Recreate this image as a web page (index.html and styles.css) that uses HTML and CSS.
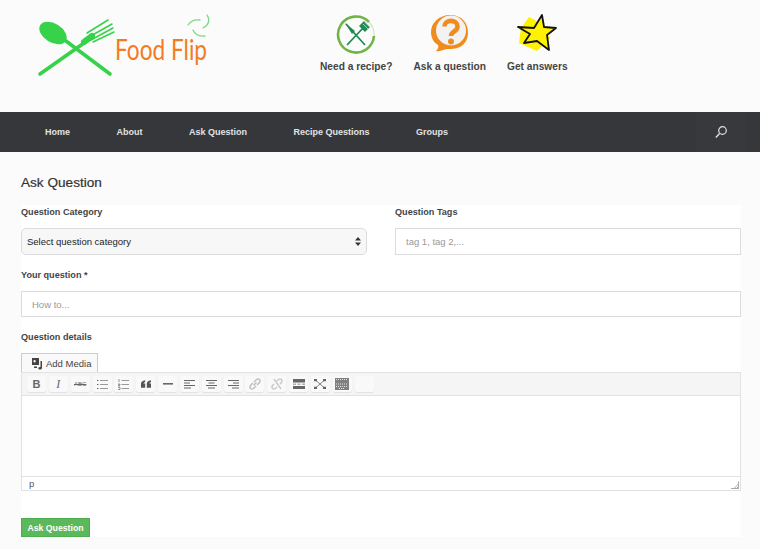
FILE: index.html
```html
<!DOCTYPE html>
<html lang="en">
<head>
    <meta charset="UTF-8">
    <title>Ask Question - Food Flip</title>
    <link rel="stylesheet" href="styles.css">
</head>
<body>
    <!-- Logo and the three steps -->
    <header class="top">
        <svg class="logo" width="200" height="70" viewBox="0 0 200 70">
            <g fill="none" stroke="#35d24a" stroke-linecap="round">
                <path d="M4 61 L48 30" stroke-width="3.6"/>
                <path d="M74 61 L30 28" stroke-width="3.6"/>
                <path d="M48 29 L56 23" stroke-width="6"/>
                <path d="M51 20 L72 7 M53 24 L76 11 M55 27 L77 15 M57 29 L78 19" stroke-width="1.5"/>
            </g>
            <g fill="none" stroke="#7fd98a" stroke-linecap="round" stroke-width="1.3">
                <path d="M152 12 Q156 6 164 7"/>
                <path d="M171 2 Q176 10 167 15"/>
                <path d="M157 17 Q160 24 169 23"/>
            </g>
            <ellipse cx="17" cy="20" rx="15" ry="9.5" fill="#35d24a" transform="rotate(32 17 20)"/>
            <text class="logo-text" x="79" y="47" textLength="92" lengthAdjust="spacingAndGlyphs">Food Flip</text>
        </svg>
        <ul class="steps">
            <li class="step">
                <svg width="40" height="40" viewBox="0 0 40 40">
                    <path d="M33 8 A18 18 0 1 0 38 22" fill="none" stroke="#6fb545" stroke-width="2.6"/>
                    <path d="M38 22 A18 18 0 0 0 33 8" fill="none" stroke="#cfe5bb" stroke-width="1.2"/>
                    <path d="M10 10 L29 31 M28 13 L11 31" stroke="#1f8a53" stroke-width="1.8"/>
                    <path d="M9 9 L19 17 L16 20 Z" fill="#1f8a53"/>
                    <path d="M26 15 L23 12 L28 7 L34 13 L29 18 Z" fill="#1f8a53"/>
                    <path d="M27 10 L32 15 M29 8.5 L33.5 13" stroke="#fff" stroke-width=".6"/>
                </svg>
                <span>Need a recipe?</span>
            </li>
            <li class="step">
                <svg width="40" height="40" viewBox="0 0 40 40">
                    <path d="M20 1 C32 1 38 9 38 19 C38 30 29 36 18 35 C14 35 11 38 6 37 C8 35 9 33 8 31 C3 28 1 23 1 18 C1 9 9 1 20 1 Z" fill="#f08c1e"/>
                    <circle cx="21" cy="16.5" r="15" fill="#f2f2f2"/>
                    <path d="M14.5 12.5 C14.5 5 27.5 5 27.5 12.5 C27.5 18 21 17 21 22" fill="none" stroke="#f08c1e" stroke-width="4.6"/>
                    <circle cx="21" cy="27.5" r="3" fill="#f08c1e"/>
                </svg>
                <span>Ask a question</span>
            </li>
            <li class="step">
                <svg width="40" height="40" viewBox="0 0 40 40">
                    <path d="M12 3 L18 6 L33 24 L20 37 L2 29 L4 14 Z" fill="#fff200"/>
                    <path d="M25 1 L27 13 L39 14 L30 21 L32 36 L20 27 L7 29 L13 20 L1 13 L17 14 Z" fill="#fff200" stroke="#111" stroke-width="1.8" stroke-linejoin="round"/>
                </svg>
                <span>Get answers</span>
            </li>
        </ul>
    </header>

    <nav class="menu">
        <a href="#">Home</a>
        <a href="#">About</a>
        <a href="#">Ask Question</a>
        <a href="#">Recipe Questions</a>
        <a href="#">Groups</a>
        <button class="search-btn" type="button" aria-label="Search">
            <svg width="14" height="14" viewBox="0 0 14 14" fill="none" stroke="#e4e4e4">
                <circle cx="8.5" cy="5.5" r="3.8" stroke-width="1.2"/>
                <path d="M5.6 8.4 L1.8 12.4" stroke-width="1.4"/>
            </svg>
        </button>
    </nav>

    <main class="content">
        <h1>Ask Question</h1>
        <form class="ask-form">
            <div class="row">
                <div class="field">
                    <label>Question Category</label>
                    <div class="select-box">
                        <span>Select question category</span>
                        <svg width="6" height="9" viewBox="0 0 6 9" fill="#333"><path d="M3 0 L6 3.5 H0 Z M3 9 L0 5.5 H6 Z"/></svg>
                    </div>
                </div>
                <div class="field">
                    <label>Question Tags</label>
                    <input class="text-input" type="text" placeholder="tag 1, tag 2,...">
                </div>
            </div>

            <label class="label-question">Your question *</label>
            <input class="text-input" type="text" placeholder="How to...">

            <label class="label-details">Question details</label>
            <button class="add-media" type="button">
                <svg width="13" height="13" viewBox="0 0 13 13" fill="#444">
                    <path d="M1 1 H8 V8 H1 Z M3.5 3 A1.2 1.2 0 1 0 3.6 5.4 A1.2 1.2 0 1 0 3.5 3 Z"/>
                    <path d="M9.5 4 H11 V11 Q11 12.5 9 12.5 Q7 12.5 7.3 11 Q7.6 9.8 9.5 10 Z M3 9.5 H6 V11 H3 Z"/>
                </svg>
                Add Media
            </button>

            <div class="editor">
                <div class="toolbar">
                    <span class="tool tool-b">B</span>
                    <span class="tool tool-i">I</span>
                    <span class="tool tool-abc">ABC</span>
                    <span class="tool"><svg width="11" height="11" viewBox="0 0 11 11" stroke="#999"><path d="M3 1.5 H11 M3 5.5 H11 M3 9.5 H11"/><path d="M0 1.5 H1.5 M0 5.5 H1.5 M0 9.5 H1.5" stroke="#666"/></svg></span>
                    <span class="tool"><svg width="11" height="11" viewBox="0 0 11 11" stroke="#999"><path d="M3.5 1.5 H11 M3.5 5.5 H11 M3.5 9.5 H11"/><path d="M1 0 V3 M0.2 5 H2 V6 H0.2 V7 H2 M0.2 8.5 H2 V10.5 H0.2" stroke="#666" stroke-width=".7" fill="none"/></svg></span>
                    <span class="tool"><svg width="10" height="8" viewBox="0 0 12 9" fill="#555"><path d="M5 0 V2 Q3 3 3 4 H5 V9 H0 V4 Q0 1 5 0 Z M12 0 V2 Q10 3 10 4 H12 V9 H7 V4 Q7 1 12 0 Z"/></svg></span>
                    <span class="tool"><svg width="10" height="2" viewBox="0 0 10 2" fill="#666"><path d="M0 0 H10 V1.6 H0 Z"/></svg></span>
                    <span class="tool"><svg width="11" height="11" viewBox="0 0 11 11" stroke="#666"><path d="M0 1.5 H11 M0 4 H6 M0 6.5 H11 M0 9 H7"/></svg></span>
                    <span class="tool"><svg width="11" height="11" viewBox="0 0 11 11" stroke="#666"><path d="M0 1.5 H11 M2.5 4 H8.5 M0 6.5 H11 M2 9 H9"/></svg></span>
                    <span class="tool"><svg width="11" height="11" viewBox="0 0 11 11" stroke="#666"><path d="M0 1.5 H11 M5 4 H11 M0 6.5 H11 M4 9 H11"/></svg></span>
                    <span class="tool"><svg width="12" height="12" viewBox="0 0 12 12" fill="none" stroke="#bdbdbd" stroke-width="1.4"><path d="M5 4 L7.5 1.5 Q9 0.5 10.5 1.5 Q11.5 3 10.5 4.5 L8 7 M7 8 L4.5 10.5 Q3 11.5 1.5 10.5 Q0.5 9 1.5 7.5 L4 5 M4.5 7.5 L7.5 4.5"/></svg></span>
                    <span class="tool"><svg width="12" height="12" viewBox="0 0 12 12" fill="none" stroke="#c8c8c8" stroke-width="1.4"><path d="M6 3 L7.5 1.5 Q9 0.5 10.5 1.5 Q11.5 3 10.5 4.5 L9 6 M6 9 L4.5 10.5 Q3 11.5 1.5 10.5 Q0.5 9 1.5 7.5 L3 6 M3 1 L10 11"/></svg></span>
                    <span class="tool"><svg width="12" height="10" viewBox="0 0 12 10" fill="#666"><path d="M0 0 H12 V3.5 H0 Z M0 7 H12 V10 H0 Z M0 4.7 H3 V5.6 H0 Z M4.5 4.7 H7.5 V5.6 H4.5 Z M9 4.7 H12 V5.6 H9 Z"/></svg></span>
                    <span class="tool"><svg width="12" height="10" viewBox="0 0 12 10" fill="#666" stroke="#666"><path d="M2 1.5 L10 8.5 M10 1.5 L2 8.5" stroke-width=".8"/><path d="M0 0 H3 V2.2 H0 Z M9 0 H12 V2.2 H9 Z M0 7.8 H3 V10 H0 Z M9 7.8 H12 V10 H9 Z" stroke="none"/></svg></span>
                    <span class="tool"><svg width="14" height="12" viewBox="0 0 14 12"><path d="M0 0 H14 V12 H0 Z" fill="#808080"/><path d="M1 1.5 H13 M1 6 H13 M1 8.5 H13 M4 10.5 H10" stroke="#e4e4e4" stroke-dasharray="1 1"/></svg></span>
                    <span class="tool"></span>
                </div>
                <div class="editor-area"></div>
                <div class="status">
                    <span>p</span>
                    <svg class="grip" width="8" height="8" viewBox="0 0 8 8" stroke="#aaa"><path d="M0 7.5 H8 M3 7.5 L7.5 3 M5.5 7.5 L7.5 5.5 M7.5 0.5 V8"/></svg>
                </div>
            </div>

            <button class="submit-btn" type="button">Ask Question</button>
        </form>
    </main>
</body>
</html>
```

FILE: styles.css
```css
/* Page */
body {
    margin: 0;
    font-family: "Liberation Sans", Arial, sans-serif;
    background-color: #fbfbfb;
    color: #333;
}

/* Top band with logo */
.top {
    height: 112px;
    display: flex;
    box-sizing: border-box;
    padding: 13px 0 0 36px;
}
.logo {
    display: block;
    flex: none;
}
.logo-text {
    font-family: "Lato", sans-serif;
    font-size: 28px;
    font-weight: normal;
    fill: #f47b20;
}
.steps {
    display: flex;
    list-style: none;
    margin: 0 0 0 84px;
    padding: 1px 0 0;
}
.step {
    display: flex;
    flex-direction: column;
    align-items: center;
    gap: 7px;
    padding-right: 21px;
    font-size: 10.2px;
    font-weight: bold;
    color: #444;
    white-space: nowrap;
}
.step:last-child {
    padding-right: 0;
}

/* Dark menu */
.menu {
    height: 40px;
    display: flex;
    align-items: center;
    padding-left: 45px;
    gap: 46.5px;
    background-color: #36373b;
}
.menu a {
    color: #e2e2e2;
    font-size: 9px;
    font-weight: bold;
    text-decoration: none;
}
.search-btn {
    margin-left: auto;
    width: 50px;
    height: 40px;
    margin-right: 14px;
    padding: 0;
    border: none;
    background-color: #38393d;
    display: flex;
    align-items: center;
    justify-content: center;
}

/* Content */
.content {
    padding: 0 19px 0 21px;
}
h1 {
    margin: 0;
    height: 53px;
    line-height: 62px;
    font-size: 13.6px;
    font-weight: normal;
    color: #333;
    -webkit-text-stroke: 0.2px #333;
}
.ask-form {
    background-color: #fff;
    height: 332px;
}
.row {
    display: flex;
    gap: 28px;
}
.field {
    flex: 1;
}
label {
    display: block;
    font-size: 9.1px;
    font-weight: bold;
    color: #444;
    line-height: 12px;
}
.field label {
    padding-top: 1px;
    margin-bottom: 10px;
}
.select-box {
    box-sizing: border-box;
    height: 27px;
    display: flex;
    align-items: center;
    justify-content: space-between;
    padding: 0 5px 0 5px;
    font-size: 9.5px;
    color: #222;
    background-color: #f7f7f7;
    border: 1px solid #dcdcdc;
    border-radius: 5px;
}
.text-input {
    display: block;
    box-sizing: border-box;
    width: 100%;
    height: 26px;
    margin: 0;
    padding: 0 10px;
    font-family: inherit;
    font-size: 9.5px;
    border: 1px solid #dcdcdc;
    border-radius: 0;
    background-color: #fff;
}
.field .text-input {
    height: 27px;
}
.text-input::placeholder {
    color: #999;
    opacity: 1;
}
.label-question {
    margin: 14px 0 10px;
}
.label-details {
    margin: 14px 0 10px;
}

/* Editor */
.add-media {
    box-sizing: border-box;
    width: 77px;
    height: 20px;
    display: flex;
    align-items: center;
    gap: 2px;
    margin: 0 0 -1px;
    padding: 0 0 0 9px;
    font-family: inherit;
    font-size: 9.5px;
    color: #444;
    background-color: #f9f9f9;
    border: 1px solid #ccc;
}
.editor {
    border: 1px solid #e2e2e2;
}
.toolbar {
    height: 23px;
    display: flex;
    align-items: center;
    gap: 2.85px;
    padding-left: 5px;
    box-sizing: border-box;
    background-color: #f5f5f5;
    border-bottom: 1px solid #e2e2e2;
}
.tool {
    box-sizing: border-box;
    width: 19px;
    height: 16px;
    display: flex;
    align-items: center;
    justify-content: center;
    background-color: #f9f9f9;
    border-radius: 2px;
    box-shadow: 0 1px 1px rgba(0, 0, 0, 0.08);
    color: #666;
    font-size: 11px;
}
.tool-b {
    font-weight: bold;
}
.tool-i {
    font-family: "Liberation Serif", serif;
    font-style: italic;
    font-size: 12px;
}
.tool-abc {
    font-size: 6px;
    text-decoration: line-through;
}
.editor-area {
    height: 80px;
    background-color: #fff;
    border-bottom: 1px solid #e2e2e2;
}
.status {
    height: 13px;
    display: flex;
    align-items: center;
    justify-content: space-between;
    padding: 0 1px 0 7px;
    font-size: 9.5px;
    color: #555;
}
.grip {
    align-self: flex-end;
    margin-bottom: 1px;
}

/* Submit */
.submit-btn {
    display: block;
    box-sizing: border-box;
    width: 69px;
    height: 19px;
    margin-top: 27px;
    padding: 0;
    font-family: inherit;
    font-size: 8.7px;
    font-weight: bold;
    color: #fff;
    background-color: #5cb85c;
    border: 1px solid #4cae4c;
}
```
